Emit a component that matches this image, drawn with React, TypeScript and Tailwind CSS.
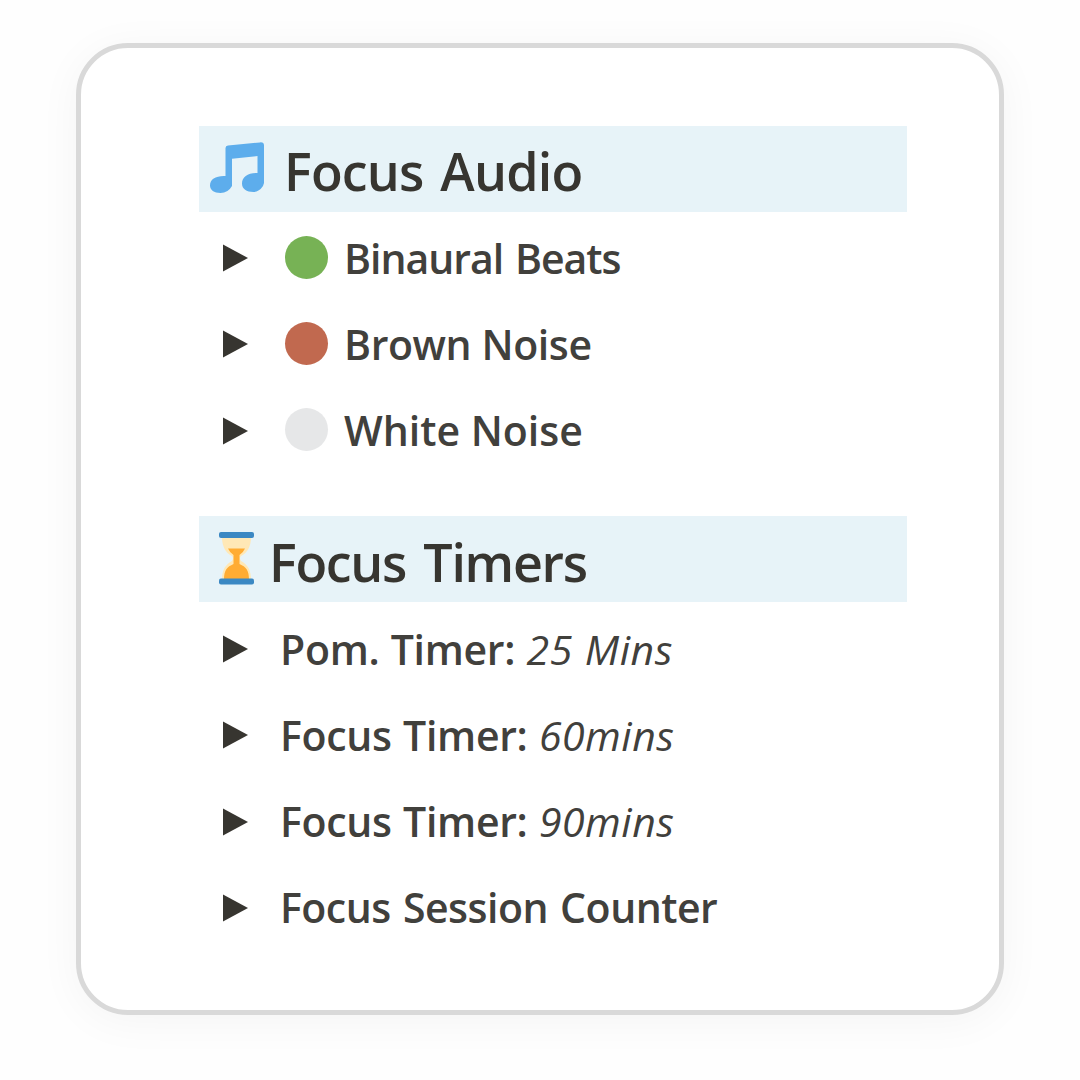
import type { ReactNode } from "react";

function MusicIcon() {
  return (
    <svg className="ml-[11px] h-[54px] w-[55px] shrink-0" viewBox="0 0 55 54" fill="#5dadec">
      <path d="M15.500 6Q15.500 4 18 3.600L50 0.400Q54 0 54 3.600V41L53 44Q49 50 43.500 50C36.500 50 32 47 32 41.500C32 35 38 30.500 47.500 31V14L22 16.800V44Q18 51 10.500 51C4 51 0 48 0 43.500C0 37 6 33.500 15.500 34Z" />
    </svg>
  );
}

function HourglassIcon() {
  return (
    <svg className="ml-[20px] h-[53px] w-[35px] shrink-0" viewBox="0 0 35 53">
      <path d="M3 5H32C32 15 28 21 22 24Q20 26 22 29C29 33 32 38 32 48H3C3 38 6 33 13 29Q15 26 13 24C7 21 3 15 3 5Z" fill="#ffe8b6" />
      <path d="M9 16.500H26Q24 21 20.500 23V32C27 35 30 38 30 47.500H5C5 38 8 35 14.500 32V23Q11 21 9 16.500Z" fill="#ffac33" />
      <rect width="35" height="6" rx="2" fill="#3b88c3" />
      <rect y="46.500" width="35" height="6" rx="2" fill="#3b88c3" />
    </svg>
  );
}

function Header({ icon, children }: { icon: ReactNode; children: ReactNode }) {
  return (
    <div className="flex h-[86px] w-[708px] items-center bg-[#e7f3f8] text-[#373530]">
      {icon}
      {children}
    </div>
  );
}

function Row({ dot, tracking, children }: { dot?: ReactNode; tracking?: string; children: ReactNode }) {
  return (
    <li className="flex h-[86.300px] items-center">
      <svg className="ml-[24px] h-[28px] w-[25px] shrink-0" viewBox="0 0 25 28" fill="#373530">
        <path d="M0 0.500L25 14L0 27.500Z" />
      </svg>
      {dot ? <span className="ml-[37px] flex w-[59px] pb-[2px]">{dot}</span> : <span className="w-[32px]" />}
      <span className={`whitespace-pre text-[41px] leading-none font-semibold text-[#41403c] ${tracking}`}>{children}</span>
    </li>
  );
}

export default function App() {
  return (
    <main className="h-[1080px] w-[1080px] overflow-hidden bg-[#fefefe] px-[76px] pt-[43px] font-['Open_Sans',sans-serif]">
      <section className="h-[972px] w-[928px] rounded-[52px] border-[5px] border-[#d9d9d9] bg-white pt-[78px] pl-[118px] shadow-[0_6px_44px_rgba(0,0,0,0.045)]">
        <Header icon={<MusicIcon />}>
          <h2 className="ml-[19px] pt-[4px] text-[52px] leading-none font-semibold tracking-[-0.8px] [word-spacing:4px]">Focus Audio</h2>
        </Header>
        <ul className="pt-[3px]">
          <Row tracking="tracking-[-1px] [word-spacing:2px]" dot={<i className="size-[43px] rounded-full bg-[#77b255]" />}>Binaural Beats</Row>
          <Row tracking="tracking-[-0.4px]" dot={<i className="size-[43px] rounded-full bg-[#c1694f]" />}>Brown Noise</Row>
          <Row tracking="tracking-normal" dot={<i className="size-[43px] rounded-full bg-[#e6e7e8]" />}>White Noise</Row>
        </ul>
        <div className="pt-[42px]">
          <Header icon={<HourglassIcon />}>
            <h2 className="ml-[15px] pt-[6px] text-[52px] leading-none font-semibold tracking-[-1.3px] [word-spacing:5px]">Focus Timers</h2>
          </Header>
        </div>
        <ul className="pt-[4px]">
          <Row tracking="tracking-[-0.3px] [word-spacing:1px]">Pom. Timer: <em className="font-normal tracking-[0.5px]">25 Mins</em></Row>
          <Row tracking="tracking-[-0.3px] [word-spacing:1px]">Focus Timer: <em className="font-normal tracking-[0.5px]">60mins</em></Row>
          <Row tracking="tracking-[-0.3px] [word-spacing:1px]">Focus Timer: <em className="font-normal tracking-[0.5px]">90mins</em></Row>
          <Row tracking="tracking-[-0.5px] [word-spacing:2px]">Focus Session Counter</Row>
        </ul>
      </section>
    </main>
  );
}
